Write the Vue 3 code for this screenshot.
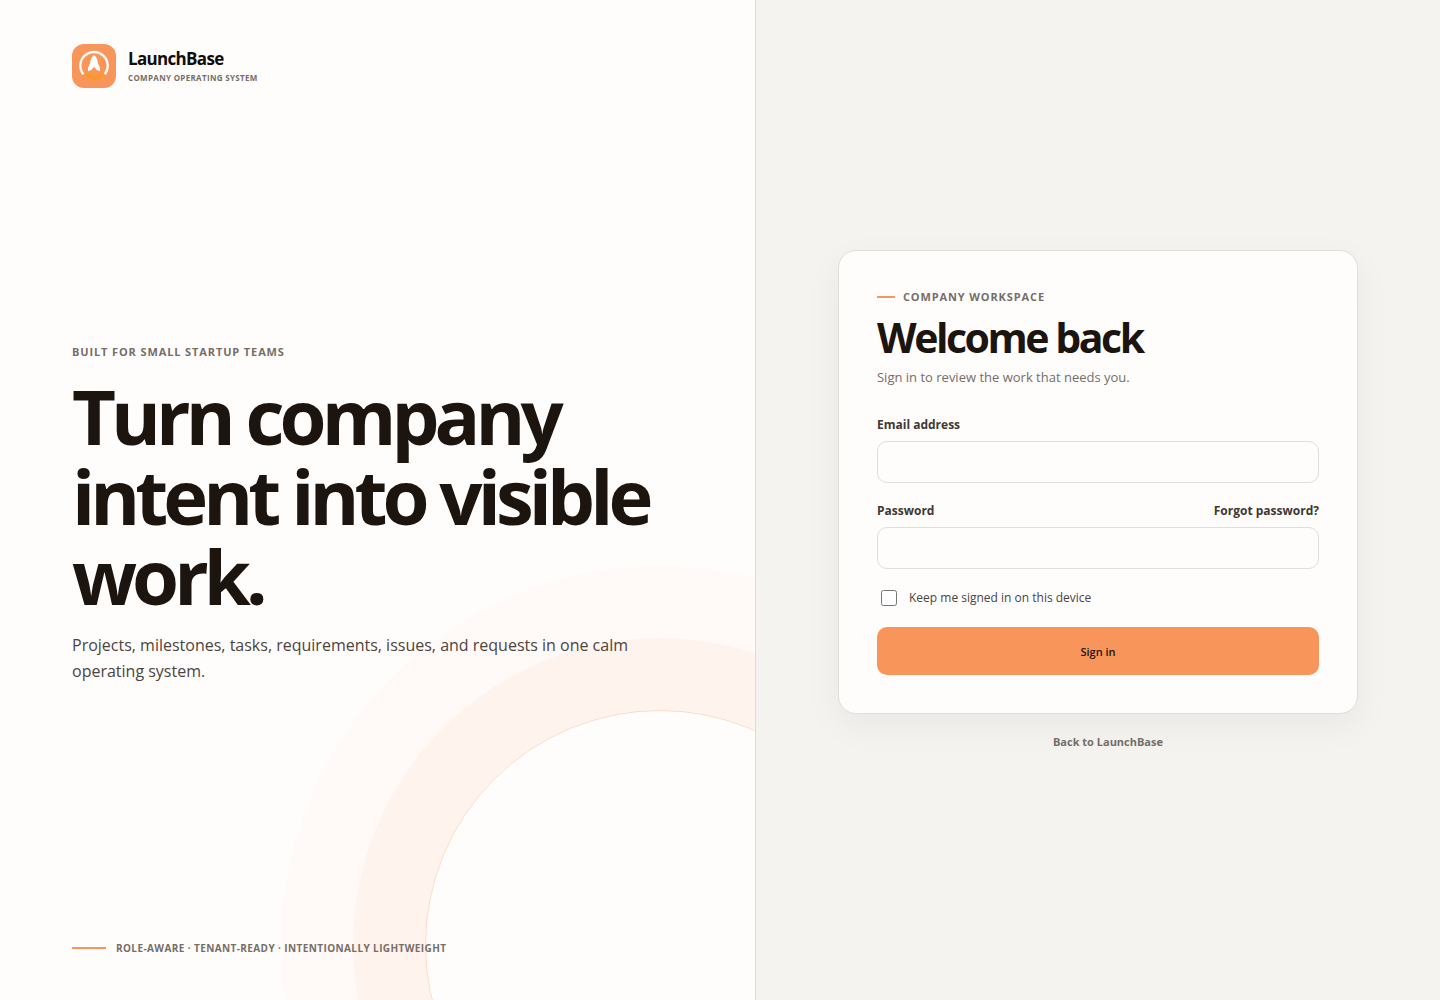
<script setup>
import { ref } from 'vue'

const email = ref('')
const password = ref('')
const remember = ref(false)
</script>

<template>
  <div class="login">
    <section class="story">
      <div class="orbit" aria-hidden="true"></div>
      <a class="brand" href="#">
        <svg class="logo" viewBox="0 0 44 44" aria-hidden="true">
          <rect width="44" height="44" rx="12" fill="#f8955a" />
          <path d="M11.300 30.200A13.700 13.700 0 1 1 32.700 30.200" fill="none" stroke="#fff8f3" stroke-width="2.400" />
          <path d="M13 27l5 2.600 4 1.200 4-1.200 5-2.600v6.600l-4 1.400-5 3-5-3-4-1.400z" fill="#f99a32" />
          <path d="M13.500 30.600l8.500 4.200 8.500-4.200" fill="none" stroke="#f68f45" stroke-width="1" />
          <path d="M22 11c-2.800 2.200-3.800 4.900-3.800 8.200l-2.200 4.600v3.400l3.800-1.400 1.300-2.400h1.800l1.300 2.400 3.800 1.400v-3.400l-2.200-4.600c0-3.300-1-6-3.800-8.200z" fill="#fff" />
        </svg>
        <span class="brand-text">
          <strong>LaunchBase</strong>
          <small>COMPANY OPERATING SYSTEM</small>
        </span>
      </a>
      <div class="pitch">
        <p class="eyebrow">BUILT FOR SMALL STARTUP TEAMS</p>
        <h1>Turn company intent into visible work.</h1>
        <p class="lead">Projects, milestones, tasks, requirements, issues, and requests in one calm operating system.</p>
      </div>
      <p class="tagline">ROLE-AWARE · TENANT-READY · INTENTIONALLY LIGHTWEIGHT</p>
    </section>

    <main class="access">
      <div class="column">
        <form class="card" @submit.prevent>
          <p class="eyebrow marked">COMPANY WORKSPACE</p>
          <h2>Welcome back</h2>
          <p class="hint">Sign in to review the work that needs you.</p>
          <div class="field">
            <label for="email">Email address</label>
            <input id="email" v-model="email" type="email" autocomplete="email" />
          </div>
          <div class="field">
            <div class="field-head">
              <label for="password">Password</label>
              <a href="#">Forgot password?</a>
            </div>
            <input id="password" v-model="password" type="password" autocomplete="current-password" />
          </div>
          <label class="remember">
            <input v-model="remember" type="checkbox" />
            Keep me signed in on this device
          </label>
          <button type="submit">Sign in</button>
        </form>
        <a class="back" href="#">Back to LaunchBase</a>
      </div>
    </main>
  </div>
</template>

<style>
body {
  margin: 0;
  background: #f4f3ef;
}
</style>

<style scoped>
.login {
  display: grid;
  grid-template-columns: 1.05fr 0.95fr;
  min-height: 100vh;
  color: #1b140f;
  font-family: "Open Sans", "Noto Sans", sans-serif;
  font-size: 13px;
}

.login * {
  box-sizing: border-box;
}

a {
  color: inherit;
  text-decoration: none;
}

p,
h1,
h2 {
  margin: 0;
}

.story {
  position: relative;
  display: flex;
  flex-direction: column;
  justify-content: space-between;
  overflow: hidden;
  padding: 44px 72px;
  border-right: 1px solid #dddcd8;
  background: #fffdfc;
}

.orbit {
  position: absolute;
  right: -140px;
  bottom: -180px;
  width: 470px;
  height: 470px;
  border: 1px solid #fbdcc8;
  border-radius: 50%;
  box-shadow: 0 0 0 72px #fff3ed, 0 0 0 144px #fff9f7;
}

.brand,
.pitch,
.tagline {
  position: relative;
}

.brand {
  display: flex;
  align-items: center;
  gap: 12px;
}

.logo {
  width: 44px;
  height: 44px;
}

.brand-text {
  display: grid;
  gap: 3px;
}

.brand-text strong {
  font-size: 17px;
  line-height: 20px;
  letter-spacing: -0.04em;
  color: #110d0a;
}

.brand-text small {
  font-size: 8px;
  font-weight: 700;
  line-height: 12px;
  letter-spacing: 0.04em;
  color: #756e68;
}

.eyebrow {
  font-size: 11px;
  font-weight: 700;
  line-height: 16px;
  letter-spacing: 0.08em;
  color: #756e68;
}

h1 {
  margin-top: 16px;
  max-width: 600px;
  font-size: 76px;
  font-weight: 700;
  line-height: 80px;
  letter-spacing: -0.065em;
}

.lead {
  margin-top: 16px;
  max-width: 560px;
  font-size: 16px;
  line-height: 26px;
  color: #4b443f;
}

.tagline {
  display: flex;
  align-items: center;
  gap: 10px;
  font-size: 10px;
  font-weight: 700;
  line-height: 16px;
  letter-spacing: 0.04em;
  color: #756e68;
}

.tagline::before {
  width: 34px;
  height: 2px;
  background: #f8955a;
  content: "";
}

.access {
  display: grid;
  place-items: center;
  padding: 42px 40px 40px;
  background: #f4f3ef;
}

.column {
  display: flex;
  flex-direction: column;
  width: 100%;
  max-width: 520px;
}

.card {
  display: flex;
  flex-direction: column;
  padding: 38px;
  border: 1px solid #dfdeda;
  border-radius: 18px;
  background: #fffdfc;
  box-shadow: 0 12px 36px rgba(27, 20, 15, 0.05);
}

.marked {
  display: flex;
  align-items: center;
  gap: 8px;
}

.marked::before {
  width: 18px;
  height: 2px;
  background: #f8955a;
  content: "";
}

h2 {
  margin-top: 8px;
  font-size: 41px;
  font-weight: 700;
  line-height: 48px;
  letter-spacing: -0.06em;
}

.hint {
  margin-top: 6px;
  line-height: 20px;
  color: #756e68;
}

.field {
  display: grid;
  gap: 6px;
  margin-top: 18px;
  font-size: 12px;
  font-weight: 700;
  line-height: 20px;
  color: #403833;
}

.hint + .field {
  margin-top: 28px;
}

.field-head {
  display: flex;
  justify-content: space-between;
}

.field input {
  width: 100%;
  height: 42px;
  padding: 0 12px;
  border: 1px solid #dfdeda;
  border-radius: 10px;
  background: #fffdfc;
  color: #1b140f;
  font: inherit;
  font-weight: 400;
}

.remember {
  display: flex;
  align-items: center;
  gap: 12px;
  margin-top: 20px;
  padding-left: 4px;
  font-size: 12px;
  line-height: 18px;
  color: #4b443f;
}

.remember input {
  width: 16px;
  height: 16px;
  margin: 0;
}

button {
  height: 48px;
  margin-top: 20px;
  border: 0;
  border-radius: 10px;
  background: #f8955a;
  color: #1b140f;
  font: inherit;
  font-size: 11px;
  font-weight: 600;
}

.back {
  align-self: center;
  margin-top: 18px;
  padding-left: 20px;
  font-size: 11px;
  font-weight: 700;
  line-height: 20px;
  color: #756e68;
}
</style>
